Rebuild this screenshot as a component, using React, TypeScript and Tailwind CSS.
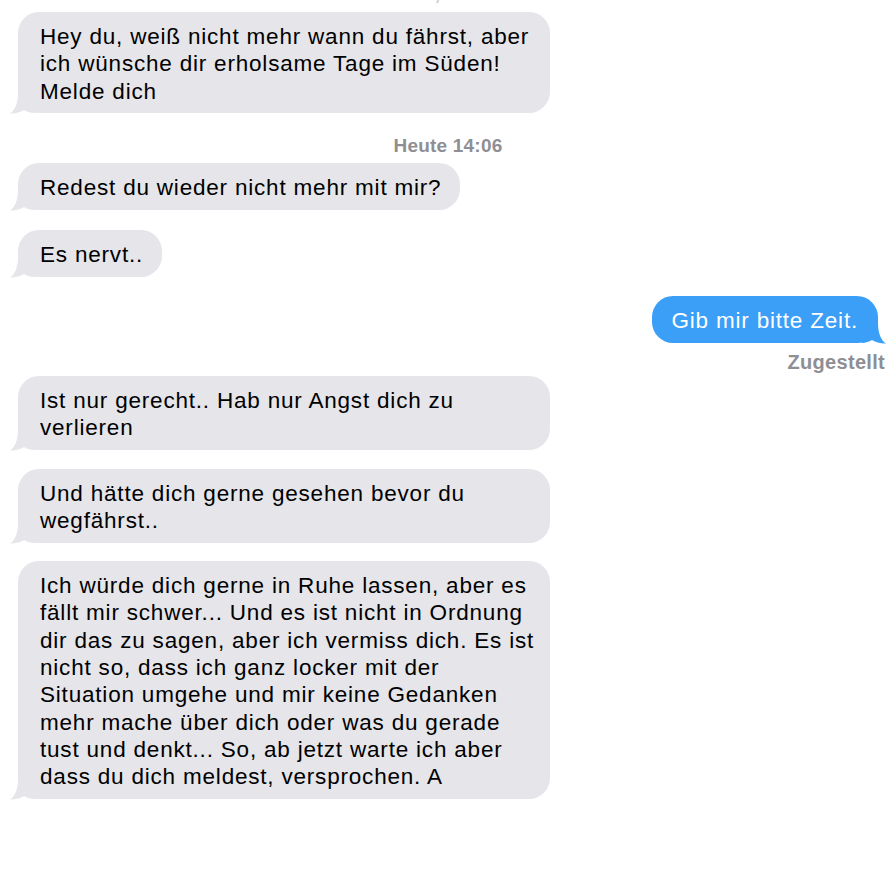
import type { ReactNode } from 'react'

const FONT = { fontFamily: '"Liberation Sans", Arial, sans-serif' }

function Tail({ side, color }: { side: 'left' | 'right'; color: string }) {
  const place = side === 'left' ? 'left-[-8px]' : 'right-[-8px] scale-x-[-1]'
  return (
    <svg
      className={`absolute bottom-[-1px] ${place}`}
      width="24"
      height="21"
      viewBox="0 0 24 21"
    >
      <path
        d="M8,0 C8,10 5,17.5 0,20.5 C5,20.8 10,19.5 14,17 C17,18.8 20,19.8 24,20 L24,0 Z"
        fill={color}
      />
    </svg>
  )
}

interface BubbleProps {
  children: ReactNode
  wide?: boolean
  className?: string
}

function IncomingBubble({ children, wide, className = '' }: BubbleProps) {
  return (
    <div className={`relative self-start ${wide ? 'w-[532px]' : 'w-fit'} ${className}`}>
      <Tail side="left" color="#e5e5ea" />
      <div className="relative rounded-[21px] bg-[#e5e5ea] pl-[22px] pr-[19px] pt-[11px] pb-[8.5px] text-[22.5px] leading-[27.3px] tracking-[0.8px] text-black whitespace-nowrap">
        {children}
      </div>
    </div>
  )
}

function OutgoingBubble({ children, className = '' }: BubbleProps) {
  return (
    <div className={`relative self-end mr-[7px] w-fit ${className}`}>
      <Tail side="right" color="#3b9ef7" />
      <div className="relative rounded-[21px] bg-[#3b9ef7] pl-[20px] pr-[20px] pt-[11px] pb-[8.5px] text-[22.5px] leading-[27.3px] tracking-[0.8px] text-white whitespace-nowrap">
        {children}
      </div>
    </div>
  )
}

export default function App() {
  return (
    <div
      className="w-[894px] h-[878px] overflow-hidden bg-white flex flex-col pl-[18px] pr-[9px]"
      style={FONT}
    >
      <div className="mt-[-16.5px] h-[20px] pr-[7px] text-center text-[19px] leading-[20px] font-bold text-[#c7c7cc]">
        Mo., 19:12
      </div>

      <IncomingBubble wide className="mt-[8.5px]">
        Hey du, weiß nicht mehr wann du fährst, aber
        <br />
        ich wünsche dir erholsame Tage im Süden!
        <br />
        Melde dich
      </IncomingBubble>

      <div className="mt-[22px] h-[22px] pr-[7px] text-center text-[19px] leading-[22px] font-bold tracking-[0.2px] text-[#8e8e93]">
        Heute 14:06
      </div>

      <IncomingBubble className="mt-[6px]">Redest du wieder nicht mehr mit mir?</IncomingBubble>

      <IncomingBubble className="mt-[20px]">Es nervt..</IncomingBubble>

      <OutgoingBubble className="mt-[19.5px]">Gib mir bitte Zeit.</OutgoingBubble>

      <div className="mt-[8px] h-[22px] self-end text-[20px] leading-[22px] font-bold tracking-[0.3px] text-[#8e8e93]">
        Zugestellt
      </div>

      <IncomingBubble wide className="mt-[2.7px]">
        Ist nur gerecht.. Hab nur Angst dich zu
        <br />
        verlieren
      </IncomingBubble>

      <IncomingBubble wide className="mt-[18.5px]">
        Und hätte dich gerne gesehen bevor du
        <br />
        wegfährst..
      </IncomingBubble>

      <IncomingBubble wide className="mt-[18.5px]">
        Ich würde dich gerne in Ruhe lassen, aber es
        <br />
        fällt mir schwer... Und es ist nicht in Ordnung
        <br />
        dir das zu sagen, aber ich vermiss dich. Es ist
        <br />
        nicht so, dass ich ganz locker mit der
        <br />
        Situation umgehe und mir keine Gedanken
        <br />
        mehr mache über dich oder was du gerade
        <br />
        tust und denkt... So, ab jetzt warte ich aber
        <br />
        dass du dich meldest, versprochen. A
      </IncomingBubble>
    </div>
  )
}
